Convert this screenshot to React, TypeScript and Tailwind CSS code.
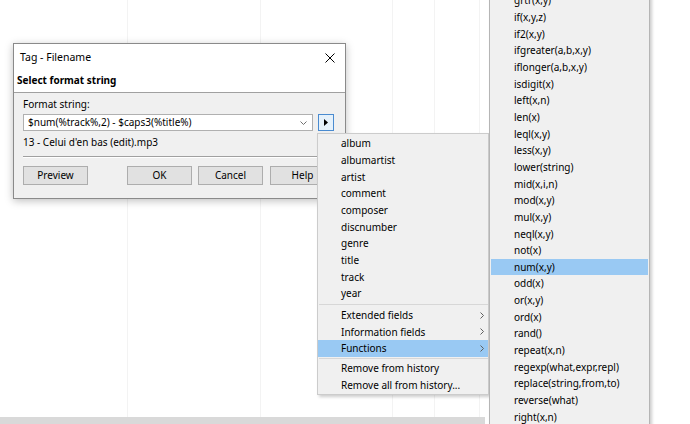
const fields = ["album", "albumartist", "artist", "comment", "composer", "discnumber", "genre", "title", "track", "year"];

const functions = [
  "grtr(x,y)", "if(x,y,z)", "if2(x,y)", "ifgreater(a,b,x,y)", "iflonger(a,b,x,y)", "isdigit(x)",
  "left(x,n)", "len(x)", "leql(x,y)", "less(x,y)", "lower(string)", "mid(x,i,n)", "mod(x,y)",
  "mul(x,y)", "neql(x,y)", "not(x)", "num(x,y)", "odd(x)", "or(x,y)", "ord(x)", "rand()",
  "repeat(x,n)", "regexp(what,expr,repl)", "replace(string,from,to)", "reverse(what)", "right(x,n)",
];

function Chevron() {
  return (
    <svg width="4" height="7" viewBox="0 0 4 7" className="absolute right-[4px] top-[5px]">
      <polyline points="0.5,0.5 3.5,3.5 0.5,6.5" fill="none" stroke="#606060" strokeWidth="1" />
    </svg>
  );
}

function MenuItem({ label, active, sub }: { label: string; active?: boolean; sub?: boolean }) {
  return (
    <div className={`relative flex h-[16.67px] items-center pl-[23px] ${active ? "bg-[#99c9f3]" : ""}`}>
      <span className="whitespace-nowrap leading-none">{label}</span>
      {sub && <Chevron />}
    </div>
  );
}

function Button({ label, className }: { label: string; className?: string }) {
  return (
    <div className={`flex h-[19px] w-[65px] items-center justify-center border border-[#adadad] bg-[#e1e1e1] ${className ?? ""}`}>
      {label}
    </div>
  );
}

export default function App() {
  return (
    <div className="relative h-[424px] w-[690px] overflow-hidden bg-white text-[10px] text-black [font-family:'Noto_Sans',sans-serif]">
      {/* list view behind */}
      <div className="flex h-full flex-col">
        <div className="flex flex-1">
          <div className="w-[128px] border-r border-[#f3f3f3]" />
          <div className="w-[133px] border-r border-[#f3f3f3]" />
          <div className="w-[132px] border-r border-[#f3f3f3]" />
          <div className="w-[42px] border-r border-[#f3f3f3]" />
          <div className="w-[45px] border-r border-[#f3f3f3]" />
        </div>
        <div className="h-[7px] w-[485px] bg-[#d9d9d9]" />
      </div>

      {/* dialog */}
      <div className="absolute left-[13px] top-[43px] flex h-[156px] w-[333px] flex-col border border-[#8a8a8a] bg-[#f0f0f0] shadow-[0_2px_8px_rgba(0,0,0,0.25)]">
        <div className="flex h-[49px] flex-col border-b border-[#a0a0a0] bg-white">
          <div className="flex h-[27px] items-center justify-between pl-[6px] pr-[10px]">
            <span className="text-[10.5px]">Tag - Filename</span>
            <svg width="10" height="10" viewBox="0 0 10 10">
              <path d="M0.5 0.5 L9.5 9.5 M9.5 0.5 L0.5 9.5" stroke="#000" strokeWidth="1" />
            </svg>
          </div>
          <div className="pl-[3px] pt-[2px] font-bold">Select format string</div>
        </div>
        <div className="flex flex-col px-[9px] pt-[4px]">
          <div className="h-[17px]">Format string:</div>
          <div className="flex items-center gap-[5px]">
            <div className="flex h-[17px] w-[290px] items-center justify-between border border-[#b0b0b0] bg-white pl-[4px] pr-[5px]">
              <span className="whitespace-nowrap">$num(%track%,2) - $caps3(%title%)</span>
              <svg width="7" height="4" viewBox="0 0 7 4">
                <polyline points="0.5,0.5 3.5,3.5 6.5,0.5" fill="none" stroke="#707070" strokeWidth="1" />
              </svg>
            </div>
            <div className="flex h-[17px] w-[16px] items-center justify-center border border-[#4a8bd0] bg-[#e5f1fb]">
              <svg width="4" height="7" viewBox="0 0 4 7">
                <polygon points="0,0 4,3.5 0,7" fill="#000" />
              </svg>
            </div>
          </div>
          <div className="mt-[3px] flex h-[17px] items-center">13 - Celui d'en bas (edit).mp3</div>
          <div className="mt-[5px] border-b border-t border-b-white border-t-[#a0a0a0]" />
          <div className="mt-[8px] flex">
            <Button label="Preview" />
            <Button label="OK" className="ml-[39px]" />
            <Button label="Cancel" className="ml-[6px]" />
            <Button label="Help" className="ml-[7px]" />
          </div>
        </div>
      </div>

      {/* context menu */}
      <div className="absolute left-[317px] top-[133px] w-[172px] border border-[#cccccc] bg-[#f0f0f0] py-[1px] shadow-[2px_2px_3px_rgba(0,0,0,0.2)]">
        {fields.map((f) => (
          <MenuItem key={f} label={f} />
        ))}
        <div className="my-[2px] ml-[1px] h-px bg-[#d7d7d7]" />
        <MenuItem label="Extended fields" sub />
        <MenuItem label="Information fields" sub />
        <MenuItem label="Functions" sub active />
        <div className="my-[1px] ml-[1px] h-px bg-[#d7d7d7]" />
        <MenuItem label="Remove from history" />
        <MenuItem label="Remove all from history..." />
      </div>

      {/* functions submenu */}
      <div className="absolute left-[489px] top-[-11px] w-[161px] border border-[#b5b5b5] bg-[#f0f0f0] px-[1px] pt-[2px] shadow-[2px_2px_3px_rgba(0,0,0,0.2)]">
        {functions.map((f) => (
          <MenuItem key={f} label={f} active={f === "num(x,y)"} />
        ))}
      </div>
    </div>
  );
}
